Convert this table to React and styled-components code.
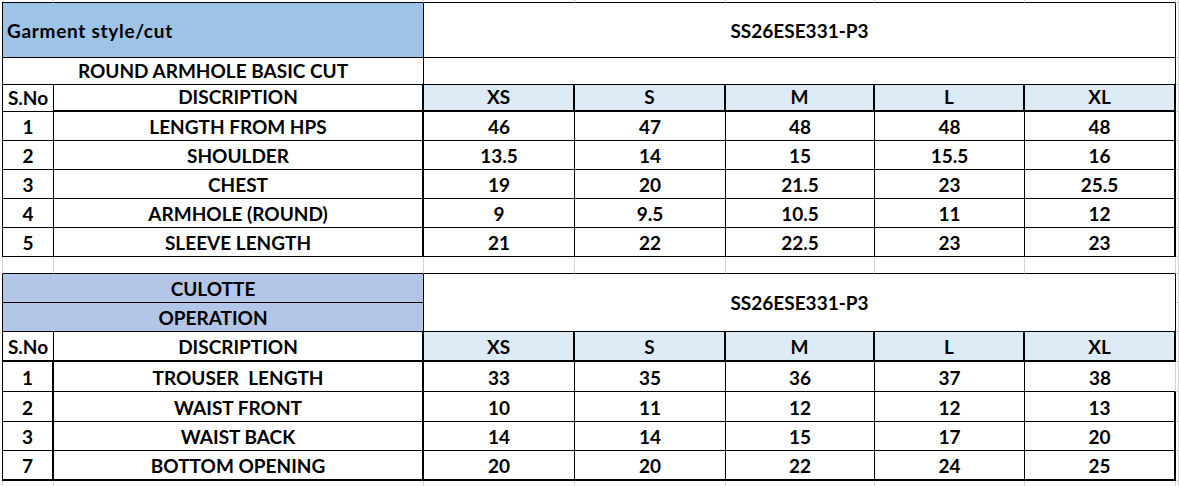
import React from 'react';
import styled, { createGlobalStyle } from 'styled-components';

const INK = '1px solid #000';
const THICK = '2px solid #000';
const GRID = '1px solid #d4d4d4';
const NONE = '0 none';

const sizes = ['XS', 'S', 'M', 'L', 'XL'];

const topRows = [
  ['1', 'LENGTH FROM HPS', ['46', '47', '48', '48', '48']],
  ['2', 'SHOULDER', ['13.5', '14', '15', '15.5', '16']],
  ['3', 'CHEST', ['19', '20', '21.5', '23', '25.5']],
  ['4', 'ARMHOLE (ROUND)', ['9', '9.5', '10.5', '11', '12']],
  ['5', 'SLEEVE LENGTH', ['21', '22', '22.5', '23', '23']],
];

const culotteRows = [
  ['1', 'TROUSER  LENGTH', ['33', '35', '36', '37', '38']],
  ['2', 'WAIST FRONT', ['10', '11', '12', '12', '13']],
  ['3', 'WAIST BACK', ['14', '14', '15', '17', '20']],
  ['7', 'BOTTOM OPENING', ['20', '20', '22', '24', '25']],
];

const GlobalStyle = createGlobalStyle`
  html, body {
    margin: 0;
    padding: 0;
    background: #fff;
    overflow: hidden;
  }
`;

const Sheet = styled.div`
  display: grid;
  grid-template-columns: 52px 370px 151px 151px 149px 150px 151px 3px;
  grid-template-rows:
    3px 55px 27px 27px repeat(5, 29px)
    17px 29px 29px 30px 30px 30px 29px 30px 6px;
  padding-left: 2px;
  width: max-content;
  font: 700 19px Lato, 'Open Sans', sans-serif;
  color: #000;
`;

const Cell = styled.div`
  box-sizing: border-box;
  grid-column: span ${(p) => p.$span || 1};
  grid-row: span ${(p) => p.$rows || 1};
  display: flex;
  align-items: ${(p) => (p.$middle ? 'center' : 'flex-end')};
  justify-content: ${(p) => (p.$start ? 'flex-start' : 'center')};
  padding: ${(p) => (p.$start ? '2px 0 0 4px' : p.$middle ? '2px 0 0' : '0 0 1px')};
  background: ${(p) => p.$bg || '#fff'};
  border-left: ${(p) => p.$bl || NONE};
  border-right: ${(p) => p.$br || GRID};
  border-bottom: ${(p) => p.$bb || GRID};
  line-height: 1.2;
  letter-spacing: ${(p) => p.$track || '0'};
  white-space: pre;
  overflow: hidden;
`;

const Strip = ({ bottom, first }) => (
  <>
    <Cell $bl={first} $bb={bottom} />
    {[0, 1, 2, 3, 4, 5].map((i) => (
      <Cell key={i} $bb={bottom} />
    ))}
    <Cell />
  </>
);

const SizeHeader = ({ snoBottom, snoRight }) => (
  <>
    <Cell $bl={INK} $br={snoRight} $bb={snoBottom}>S.No</Cell>
    <Cell $br={THICK} $bb={THICK}>DISCRIPTION</Cell>
    {sizes.map((s) => (
      <Cell key={s} $bg="#DDEBF7" $br={THICK} $bb={THICK}>
        {s}
      </Cell>
    ))}
    <Cell />
  </>
);

function MeasureRow({ no, label, values, snoRight, lastRight, bottom }) {
  return (
    <>
      <Cell $bl={INK} $br={snoRight} $bb={bottom}>{no}</Cell>
      <Cell $br={THICK} $bb={bottom}>{label}</Cell>
      {values.map((v, i) => (
        <Cell key={i} $br={i === 4 ? lastRight : INK} $bb={bottom}>
          {v}
        </Cell>
      ))}
      <Cell />
    </>
  );
}

export default function App() {
  return (
    <>
      <GlobalStyle />
      <Sheet>
        <Strip bottom={INK} />

        {/* garment style / cut */}
        <Cell
          $span={2}
          $bg="#9DC3E6"
          $bl={INK}
          $br={INK}
          $bb={INK}
          $middle
          $start
          $track="0.7px"
        >
          Garment style/cut
        </Cell>
        <Cell $span={5} $br={INK} $bb={INK} $middle>SS26ESE331-P3</Cell>
        <Cell />

        <Cell $span={2} $bl={INK} $br={INK} $bb={INK}>ROUND ARMHOLE BASIC CUT</Cell>
        <Cell $span={5} $br={INK} $bb={INK} />
        <Cell />

        <SizeHeader snoRight={INK} snoBottom={INK} />
        {topRows.map(([no, label, values]) => (
          <MeasureRow
            key={no}
            no={no}
            label={label}
            values={values}
            snoRight={INK}
            lastRight={THICK}
            bottom={INK}
          />
        ))}

        <Strip bottom={INK} first={GRID} />

        {/* culotte */}
        <Cell $span={2} $bg="#B4C6E7" $bl={INK} $br={INK} $bb={INK}>CULOTTE</Cell>
        <Cell $span={5} $rows={2} $br={INK} $bb={INK} $middle>SS26ESE331-P3</Cell>
        <Cell />
        <Cell $span={2} $bg="#B4C6E7" $bl={INK} $br={INK} $bb={INK}>OPERATION</Cell>
        <Cell />

        <SizeHeader snoRight={INK} snoBottom={THICK} />
        {culotteRows.map(([no, label, values], i) => (
          <MeasureRow
            key={no}
            no={no}
            label={label}
            values={values}
            snoRight={THICK}
            lastRight={i === 0 ? GRID : THICK}
            bottom={i === culotteRows.length - 1 ? THICK : INK}
          />
        ))}

        <Strip bottom={NONE} first={GRID} />
      </Sheet>
    </>
  );
}
